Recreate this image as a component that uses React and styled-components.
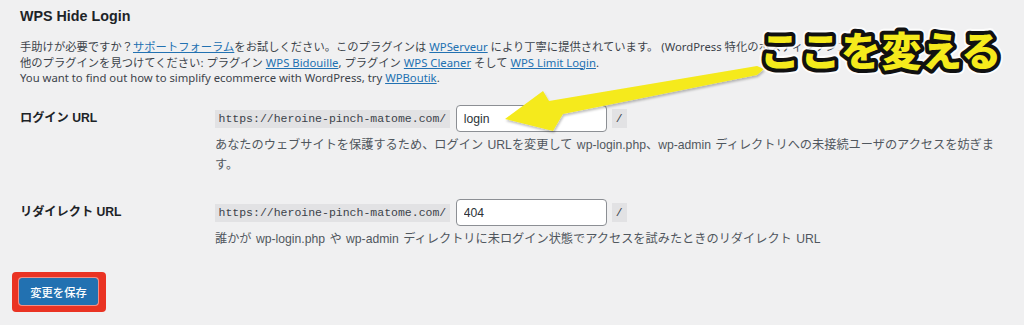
import React from 'react'
import styled, { createGlobalStyle } from "styled-components";

const GlobalStyle = createGlobalStyle`
  body {
    margin: 0;
    background: #f0f0f1;
    font-family: "Liberation Sans", "Noto Sans CJK JP", sans-serif;
    color: #3c434a;
  }
`;

const Page = styled.div`
  position: relative;
  box-sizing: border-box;
  width: 1024px;
  height: 325px;
  padding: 6px 20px 0;
  overflow: hidden;
`;

const Title = styled.h2`
  margin: 0;
  font-size: 14.3px;
  line-height: 20px;
  font-weight: 700;
  color: #1d2327;
`;

const Intro = styled.p`
  margin: 13px 0 0;
  font-family: "Noto Sans", "Noto Sans CJK JP", sans-serif;
  font-size: 11.3px;
  line-height: 15.5px;
  white-space: nowrap;
`;

const A = styled.a`
  color: #2271b1;
  text-decoration: underline;
`;

const Row = styled.div`
  display: flex;
  align-items: flex-start;
  margin-top: ${(p) => p.$top}px;
`;

const Label = styled.div`
  flex: none;
  width: 195px;
  font-size: 12.2px;
  line-height: 27px;
  font-weight: 700;
  color: #1d2327;
`;

const Field = styled.div`
  flex: 1;
  min-width: 0;
`;

const InputLine = styled.div`
  display: flex;
  align-items: center;
`;

const Code = styled.code`
  background: #e2e2e4;
  color: #3c434a;
  font-family: "Liberation Mono", monospace;
  font-size: 11.5px;
  line-height: ${(p) => (p.$slash ? 19 : 18)}px;
  padding: 0 ${(p) => (p.$slash ? 4 : 3.5)}px;
`;

const Input = styled.input`
  box-sizing: border-box;
  width: 151px;
  height: 27px;
  margin: 0 5px 0 6px;
  padding: 0 7px;
  border: 1px solid #8c8f94;
  border-radius: 4px;
  background: #fff;
  color: #2c3338;
  font-family: "Liberation Sans", "Noto Sans CJK JP", sans-serif;
  font-size: 12.2px;
  outline: none;
`;

const Description = styled.p`
  margin: 3px 0 0;
  font-size: 12.2px;
  line-height: 20px;
  color: #50575e;
  word-spacing: 1px;
`;

const Highlight = styled.div`
  display: inline-block;
  margin: 23px 0 0 -8px;
  padding: 6px 8px 7px 7px;
  background: #ea3323;
  border-radius: 4px;
`;

const SaveButton = styled.button`
  display: block;
  box-sizing: border-box;
  width: 79px;
  height: 27px;
  padding: 0;
  border: 1px solid #2271b1;
  border-radius: 3px;
  background: #2271b1;
  color: #fff;
  font-family: "Noto Sans CJK JP", sans-serif;
  font-size: 11.3px;
  font-weight: 500;
  box-shadow: 0 0 0 1px rgba(255, 255, 255, 0.45);
`;

const Overlay = styled.svg`
  position: absolute;
  top: 0;
  left: 0;
  pointer-events: none;
`;

function Annotation() {
  return (
    <Overlay width="1024" height="325" viewBox="0 0 1024 325">
      <defs>
        <filter id="sh" x="-10%" y="-20%" width="120%" height="150%">
          <feDropShadow dx="1" dy="2" stdDeviation="1.2" floodColor="#000" floodOpacity="0.25" />
        </filter>
      </defs>
      <polygon
        points="505,119 543,91 549,101 757,66 764,69 757,75 563,114 553,131"
        fill="#f5ea1c"
        filter="url(#sh)"
      />
      <g fontFamily='"Noto Sans CJK JP", sans-serif' fontWeight="900" fontSize="40" letterSpacing="0.5">
        <text x="760" y="66" fill="#f5ea1c" stroke="#ffffff" strokeWidth="12" strokeLinejoin="round" opacity="0.8">ここを変える</text>
        <text x="760" y="66" fill="#f5ea1c" stroke="#111" strokeWidth="8" strokeLinejoin="round" paintOrder="stroke">ここを変える</text>
      </g>
    </Overlay>
  );
}

function App() {
  return (
    <>
      <GlobalStyle />
      <Page>
        <Title>WPS Hide Login</Title>
        <Intro>
          手助けが必要ですか？<A href="#">サポートフォーラム</A>をお試しください。このプラグインは <A href="#">WPServeur</A> により丁寧に提供されています。 (WordPress 特化のホスティングシステム)
          <br />
          他のプラグインを見つけてください: プラグイン <A href="#">WPS Bidouille</A>, プラグイン <A href="#">WPS Cleaner</A> そして <A href="#">WPS Limit Login</A>.
          <br />
          You want to find out how to simplify ecommerce with WordPress, try <A href="#">WPBoutik</A>.
        </Intro>

        <Row $top={19.5}>
          <Label>ログイン URL</Label>
          <Field>
            <InputLine>
              <Code>https://heroine-pinch-matome.com/</Code>
              <Input defaultValue="login" />
              <Code $slash>/</Code>
            </InputLine>
            <Description>
              あなたのウェブサイトを保護するため、ログイン URLを変更して wp-login.php、wp-admin ディレクトリへの未接続ユーザのアクセスを妨ぎます。
            </Description>
          </Field>
        </Row>

        <Row $top={24}>
          <Label>リダイレクト URL</Label>
          <Field>
            <InputLine>
              <Code>https://heroine-pinch-matome.com/</Code>
              <Input defaultValue="404" />
              <Code $slash>/</Code>
            </InputLine>
            <Description>
              誰かが wp-login.php や wp-admin ディレクトリに未ログイン状態でアクセスを試みたときのリダイレクト URL
            </Description>
          </Field>
        </Row>

        <Highlight>
          <SaveButton type="button">変更を保存</SaveButton>
        </Highlight>

        <Annotation />
      </Page>
    </>
  );
}

export default App;
